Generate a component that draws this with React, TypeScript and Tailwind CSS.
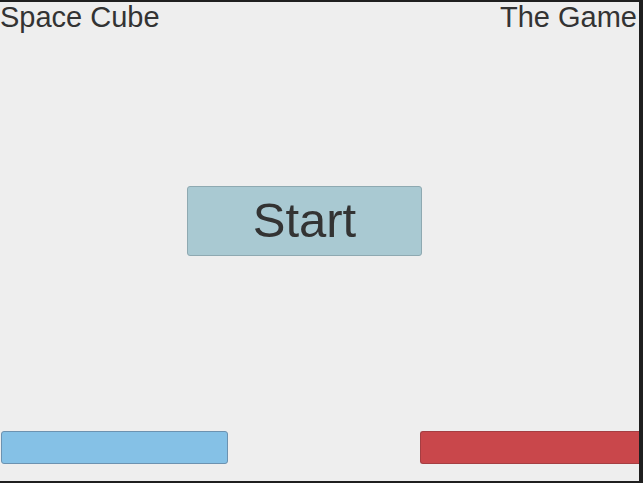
export default function App() {
  return (
    <div className="w-[643px] h-[483px] box-border bg-[#eeeeee] border-t-2 border-r-4 border-b-2 border-[#1f1f1f] flex flex-col overflow-hidden text-[#333333] font-['Liberation_Sans',Arial,sans-serif]">
      <header className="flex justify-between items-start text-[29px] leading-none pt-[1px] pr-[2px] h-[29px]">
        <span>Space Cube</span>
        <span>The Game</span>
      </header>

      <div className="mt-[155px] ml-[187px]">
        <button className="w-[235px] h-[70px] bg-[#a9c9d2] border border-[#8ea9b1] rounded-[3px] text-[49px] leading-none text-[#333333] flex items-center justify-center pb-[2px]">
          Start
        </button>
      </div>

      <div className="mt-auto mb-[17px] flex justify-between items-center">
        <div className="ml-[1px] w-[227px] h-[33px] bg-[#85c1e6] border border-[#6c92b0] rounded-[3px]" />
        <div className="w-[219px] h-[33px] bg-[#c9474b] border border-[#a53e42] border-r-0 rounded-l-[3px]" />
      </div>
    </div>
  );
}
